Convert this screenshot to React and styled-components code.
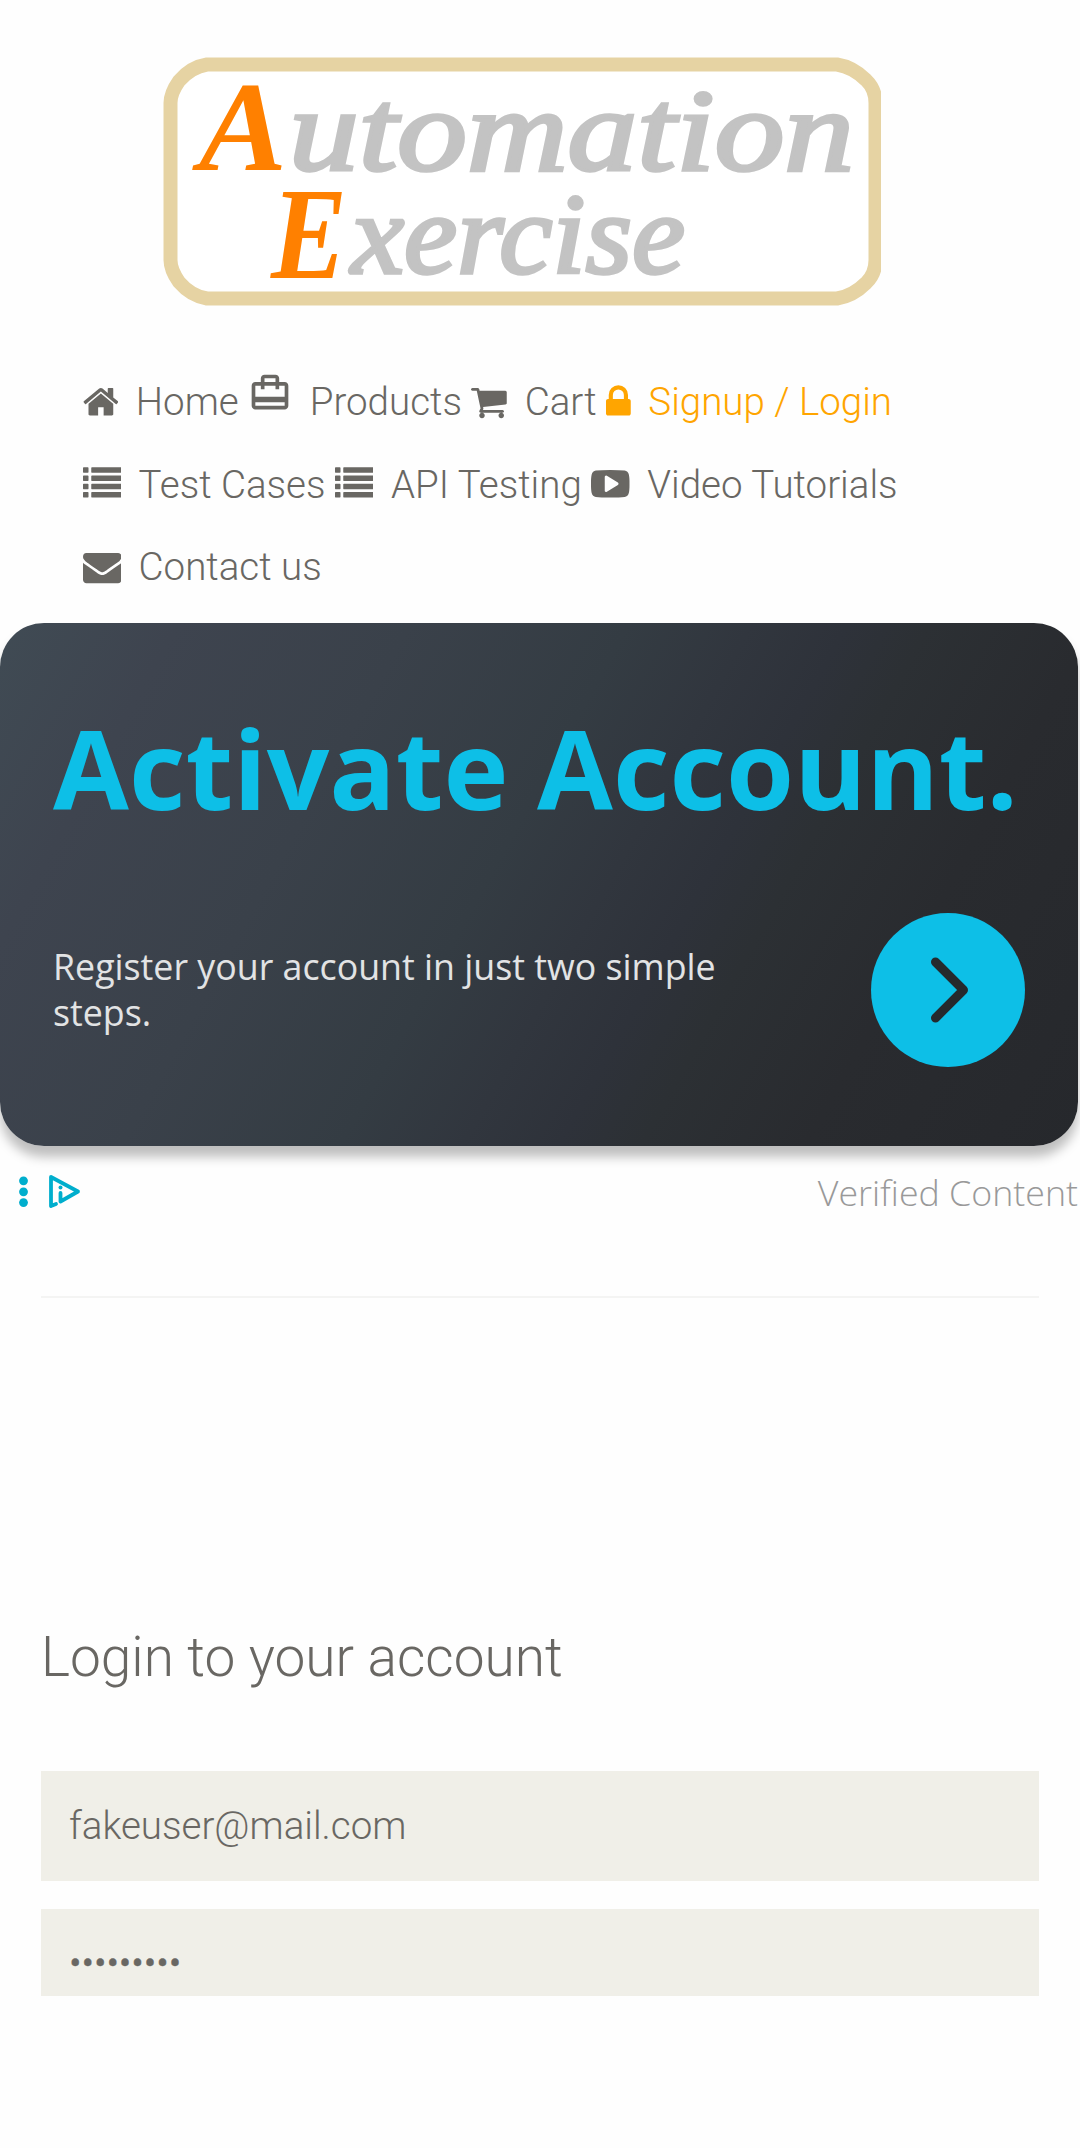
import React from "react";
import styled, { createGlobalStyle } from "styled-components";

const GlobalStyle = createGlobalStyle`
  * { box-sizing: border-box; }
  body { margin: 0; background: #fefefe; color: #696763; font-family: Roboto, "Liberation Sans", sans-serif; font-weight: 300; }
`;

const Page = styled.div`
  display: flex;
  flex-direction: column;
  min-height: 2148px;
`;

const Header = styled.header`
  display: flex;
  flex-direction: column;
`;

const Logo = styled.svg`
  display: block;
  width: 718px;
  height: 249px;
  margin: 57px 0 0 163px;
  font-family: "Liberation Serif", serif;
  font-weight: 700;
  font-style: italic;
`;

const Nav = styled.nav`
  display: flex;
  flex-direction: column;
  padding: 55px 0 0 82.5px;
`;

const NavRow = styled.div`
  display: flex;
  align-items: baseline;
  gap: 9.4px;
  height: 82.5px;
  line-height: 82.5px;
  white-space: nowrap;
`;

const NavLink = styled.a`
  display: flex;
  align-items: baseline;
  gap: 17.6px;
  font-size: 38.5px;
  color: ${(p) => (p.$active ? "#ffa500" : "#696763")};
`;

const Glyph = styled.svg`
  display: block;
  flex: none;
  width: ${(p) => p.$width}px;
  height: 38.5px;
  transform: translateY(5.5px);
  fill: currentColor;
`;

const BagGlyph = styled.svg`
  display: block;
  flex: none;
  width: 44px;
  height: 44px;
  fill: currentColor;
`;

const Banner = styled.section`
  display: flex;
  flex-direction: column;
  width: 1078px;
  height: 523px;
  margin-top: 14px;
  padding: 69px 53px 0 53px;
  border-radius: 44px;
  background: linear-gradient(119deg, #404b54 0%, #3e444f 13%, #3a414a 30%, #343c43 46%, #31363e 55%, #2e323a 62%, #2c3034 68%, #292b2f 80%, #26282c 100%);
  box-shadow: 0 11px 11px rgba(0, 0, 0, 0.25);
  font-family: "Open Sans", "Liberation Sans", sans-serif;
`;

const BannerTitle = styled.h1`
  margin: 0;
  font-size: 110px;
  line-height: 150px;
  font-weight: 700;
  color: #0dbfe7;
  white-space: nowrap;
`;

const BannerBody = styled.div`
  display: flex;
  align-items: center;
  justify-content: space-between;
  height: 154px;
  margin-top: 71px;
`;

const BannerText = styled.p`
  margin: 0 0 2px;
  width: 700px;
  font-size: 35.75px;
  line-height: 46px;
  font-weight: 400;
  color: #e2e3e4;
`;

const RoundButton = styled.button`
  display: grid;
  place-items: center;
  width: 154px;
  height: 154px;
  padding: 0;
  border: 0;
  border-radius: 50%;
  background: #0dbfe7;
`;

const AdFooter = styled.div`
  display: flex;
  align-items: center;
  justify-content: space-between;
  height: 60px;
  margin-top: 16px;
  padding: 0 2px 0 19px;
  font-family: "Open Sans", "Liberation Sans", sans-serif;
  font-size: 35.75px;
  color: #999;
  white-space: nowrap;
`;

const Divider = styled.hr`
  width: 998px;
  height: 2px;
  margin: 74px 0 0 41px;
  border: 0;
  background: #f4f4f3;
`;

const LoginForm = styled.form`
  display: flex;
  flex-direction: column;
  padding: 325px 41px 0;
`;

const FormTitle = styled.h2`
  margin: 0 0 80px;
  font-size: 55px;
  line-height: 68px;
  font-weight: 300;
`;

const Field = styled.input`
  display: block;
  width: 100%;
  height: 110px;
  margin: 0 0 28px;
  padding: 0 0 0 28px;
  border: 0;
  border-radius: 0;
  outline: 0;
  background: #f0efe8;
  color: #696763;
  font-family: Roboto, "Liberation Sans", sans-serif;
  font-size: 38.5px;
  font-weight: 300;
`;

const PasswordField = styled(Field)`
  height: 87px;
  padding-top: 20px;
  -webkit-text-stroke: 0.4px #696763;
`;

const icons = {
  home: [1664, 64, "M1472 992v480q0 26-19 45t-45 19h-384v-384h-256v384h-384q-26 0-45-19t-19-45v-480q0-1 .5-3t.5-3l575-474 575 474q1 2 1 6zm223-69l-62 74q-8 9-21 11h-3q-13 0-21-7l-692-577-692 577q-12 8-24 7-13-2-21-11l-62-74q-8-10-7-23.5t11-21.5l719-599q32-26 76-26t76 26l244 204v-195q0-14 9-23t23-9h192q14 0 23 9t9 23v408l219 182q10 8 11 21.5t-7 23.5z"],
  cart: [1664, 64, "M704 1536q0 52-38 90t-90 38-90-38-38-90 38-90 90-38 90 38 38 90zm896 0q0 52-38 90t-90 38-90-38-38-90 38-90 90-38 90 38 38 90zm128-1088v512q0 24-16.5 42.5t-40.5 21.5l-1044 122q13 60 13 70 0 16-24 64h920q26 0 45 19t19 45-19 45-45 19h-1024q-26 0-45-19t-19-45q0-11 8-31.5t16-36 21.5-40 15.5-29.5l-177-823h-204q-26 0-45-19t-19-45 19-45 45-19h256q16 0 28.5 6.5t19.5 15.5 13 24.5 8 26 5.5 29.5 4.5 26h1201q26 0 45 19t19 45z"],
  lock: [1152, 320, "M640 768h512v-192q0-106-75-181t-181-75-181 75-75 181v192zm832 96v576q0 40-28 68t-68 28h-960q-40 0-68-28t-28-68v-576q0-40 28-68t68-28h32v-192q0-184 132-316t316-132 316 132 132 316v192h32q40 0 68 28t28 68z"],
  list: [1792, 0, "M256 1312v192q0 13-9.500 22.500t-22.500 9.500h-192q-13 0-22.500-9.500t-9.500-22.500v-192q0-13 9.500-22.500t22.500-9.500h192q13 0 22.500 9.500t9.500 22.500zm0-384v192q0 13-9.500 22.500t-22.500 9.500h-192q-13 0-22.500-9.500t-9.500-22.500v-192q0-13 9.500-22.500t22.500-9.500h192q13 0 22.500 9.500t9.500 22.500zm0-384v192q0 13-9.500 22.500t-22.500 9.500h-192q-13 0-22.500-9.500t-9.500-22.500v-192q0-13 9.500-22.500t22.500-9.500h192q13 0 22.500 9.500t9.500 22.500zm1536 768v192q0 13-9.500 22.500t-22.500 9.500h-1344q-13 0-22.500-9.500t-9.500-22.500v-192q0-13 9.500-22.500t22.500-9.500h1344q13 0 22.500 9.500t9.500 22.500zm-1536-1152v192q0 13-9.500 22.500t-22.500 9.500h-192q-13 0-22.500-9.500t-9.500-22.500v-192q0-13 9.500-22.500t22.500-9.500h192q13 0 22.500 9.500t9.500 22.500zm1536 768v192q0 13-9.500 22.500t-22.500 9.500h-1344q-13 0-22.500-9.500t-9.500-22.500v-192q0-13 9.500-22.500t22.500-9.500h1344q13 0 22.500 9.500t9.500 22.500zm0-384v192q0 13-9.500 22.500t-22.500 9.500h-1344q-13 0-22.500-9.500t-9.500-22.500v-192q0-13 9.500-22.500t22.500-9.500h1344q13 0 22.500 9.500t9.500 22.500zm0-384v192q0 13-9.500 22.500t-22.500 9.500h-1344q-13 0-22.500-9.500t-9.500-22.500v-192q0-13 9.500-22.500t22.500-9.500h1344q13 0 22.500 9.500t9.500 22.500z"],
  video: [1792, 0, "M1280 896q0-37-30-54l-512-320q-31-20-65-2-33 18-33 56v640q0 38 33 56 16 8 31 8 20 0 34-10l512-320q30-17 30-54zm512 0q0 96-1 150t-8.5 136.5-22.5 147.5q-16 73-69 123t-124 58q-222 25-671 25t-671-25q-71-8-124.5-58t-69.500-123q-14-65-21.500-147.500t-8.500-136.500-1-150 1-150 8.500-136.500 22.500-147.500q16-73 69-123t124-58q222-25 671-25t671 25q71 8 124.500 58t69.500 123q14 65 21.500 147.500t8.500 136.500 1 150z"],
  mail: [1792, 0, "M1792 710v794q0 66-47 113t-113 47h-1472q-66 0-113-47t-47-113v-794q44 49 101 87 362 246 497 345 57 42 92.5 65.5t94.5 48 110 24.5h2q51 0 110-24.5t94.5-48 92.5-65.5q170-123 498-345 57-39 100-87zm0-294q0 79-49 151t-122 123q-376 261-468 325-10 7-42.5 31t-54 38.5-52 32.5-57.5 27-50 9h-2q-23 0-50-9t-57.5-27-52-32.5-54-38.5-42.5-31q-91-64-262-182.5t-205-142.5q-62-42-117-115.5t-55-136.5q0-78 41.5-130t118.5-52h1472q65 0 112.5 47t47.5 113z"],
};

function Icon({ name }) {
  if (name === "bag") {
    return (
      <BagGlyph viewBox="0 0 24 24">
        <path d="M20 6h-3V4c0-1.11-.89-2-2-2H9c-1.11 0-2 .89-2 2v2H4c-1.110 0-2 .89-2 2v11c0 1.110.89 2 2 2h16c1.110 0 2-.89 2-2V8c0-1.110-.89-2-2-2zM9 4h6v2H9V4zm11 15H4v-2h16v2zm0-5H4V8h3v2h2V8h6v2h2V8h3v6z" />
      </BagGlyph>
    );
  }
  const [advance, left, d] = icons[name];
  return (
    <Glyph $width={(advance * 38.5) / 1792} viewBox={`${left} 0 ${advance} 1792`}>
      <path d={d} />
    </Glyph>
  );
}

const rows = [
  [
    { icon: "home", label: "Home" },
    { icon: "bag", label: "Products" },
    { icon: "cart", label: "Cart" },
    { icon: "lock", label: "Signup / Login", active: true },
  ],
  [
    { icon: "list", label: "Test Cases" },
    { icon: "list", label: "API Testing" },
    { icon: "video", label: "Video Tutorials" },
  ],
  [{ icon: "mail", label: "Contact us" }],
];

export default function App() {
  return (
    <>
      <GlobalStyle />
      <Page>
        <Header>
          <Logo viewBox="0 0 718 249">
            <path d="M44 7.500H674Q690 10 703 23Q712.500 32 712.500 46V203Q712.500 217 703 226Q690 239 674 241.500H44Q28 239 16 225Q7.500 213 7.500 203V46Q7.500 36 16 24Q28 10 44 7.500Z" fill="#fff" stroke="#e6d3a3" strokeWidth="14" />
            <text x="36" y="113" fontSize="126" textLength="88" lengthAdjust="spacingAndGlyphs" fill="#ff8000">A</text>
            <text x="126" y="113" fontSize="116" textLength="565" lengthAdjust="spacingAndGlyphs" fontWeight="400" stroke="#c3c3c3" strokeWidth="3.500" fill="#c3c3c3">utomation</text>
            <text x="108" y="221" fontSize="132" textLength="76" lengthAdjust="spacingAndGlyphs" fill="#ff8000">E</text>
            <text x="188" y="216" fontSize="114" textLength="334" lengthAdjust="spacingAndGlyphs" fontWeight="400" stroke="#c3c3c3" strokeWidth="3.500" fill="#c3c3c3">xercise</text>
          </Logo>
          <Nav>
            {rows.map((row, i) => (
              <NavRow key={i}>
                {row.map((item) => (
                  <NavLink key={item.label} $active={item.active}>
                    <Icon name={item.icon} />
                    <span>{item.label}</span>
                  </NavLink>
                ))}
              </NavRow>
            ))}
          </Nav>
        </Header>
        <Banner>
          <BannerTitle>Activate Account.</BannerTitle>
          <BannerBody>
            <BannerText>Register your account in just two simple steps.</BannerText>
            <RoundButton type="button" aria-label="Continue">
              <svg width="154" height="154" viewBox="0 0 154 154" fill="none" stroke="#25292d" strokeWidth="9" strokeLinecap="round" strokeLinejoin="round">
                <path d="M64.500 49L92.500 77L64.500 105" />
              </svg>
            </RoundButton>
          </BannerBody>
        </Banner>
        <AdFooter>
          <svg width="64" height="38" viewBox="19 1173 64 38" fill="none" stroke="#00aecd" strokeLinecap="round" strokeLinejoin="round">
            <g fill="#00aecd" stroke="none">
              <circle cx="23.500" cy="1180.800" r="4.400" />
              <circle cx="23.500" cy="1191.800" r="4.400" />
              <circle cx="23.500" cy="1202.600" r="4.400" />
              <circle cx="60.500" cy="1187.500" r="2" />
            </g>
            <path d="M56 1204L51 1206V1177L78 1191.500L60.500 1201.500V1193" strokeWidth="3.800" />
          </svg>
          <span>Verified Content</span>
        </AdFooter>
        <Divider />
        <LoginForm>
          <FormTitle>Login to your account</FormTitle>
          <Field type="text" value="fakeuser@mail.com" readOnly />
          <PasswordField type="password" value="fakeuser1" readOnly />
        </LoginForm>
      </Page>
    </>
  );
}
